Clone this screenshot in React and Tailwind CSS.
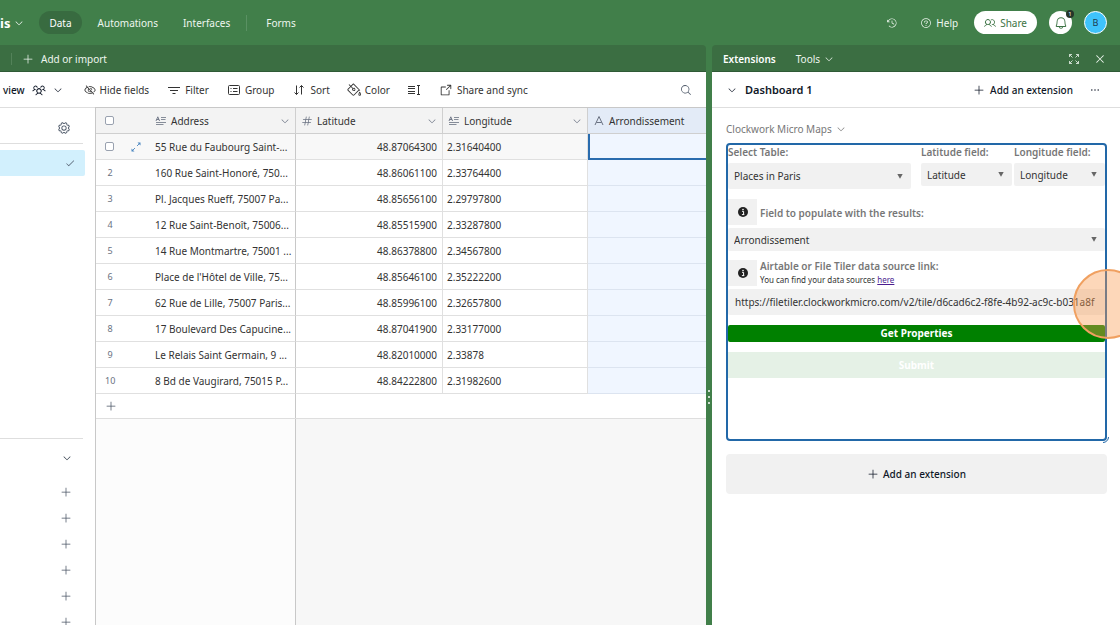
import React from "react";
import {
  PiClockCounterClockwise, PiQuestion, PiUsers, PiBell, PiCaretDown, PiX, PiPlus,
  PiEyeSlash, PiPaintBucket, PiArrowSquareOut, PiMagnifyingGlass, PiUsersThree,
  PiGear, PiCheck, PiHash, PiDotsThreeBold,
} from "react-icons/pi";

const rows = [
  ["55 Rue du Faubourg Saint-...", "48.87064300", "2.31640400"],
  ["160 Rue Saint-Honoré, 750...", "48.86061100", "2.33764400"],
  ["Pl. Jacques Rueff, 75007 Pa...", "48.85656100", "2.29797800"],
  ["12 Rue Saint-Benoît, 75006...", "48.85515900", "2.33287800"],
  ["14 Rue Montmartre, 75001 ...", "48.86378800", "2.34567800"],
  ["Place de l'Hôtel de Ville, 75...", "48.85646100", "2.35222200"],
  ["62 Rue de Lille, 75007 Paris...", "48.85996100", "2.32657800"],
  ["17 Boulevard Des Capucine...", "48.87041900", "2.33177000"],
  ["Le Relais Saint Germain, 9 ...", "48.82010000", "2.33878"],
  ["8 Bd de Vaugirard, 75015 P...", "48.84222800", "2.31982600"],
];

function Svg({ className, children, box = 14, width = 1 }) {
  return (
    <svg viewBox={`0 0 ${box} ${box}`} className={className} fill="none" stroke="currentColor" strokeWidth={width} aria-hidden="true">
      {children}
    </svg>
  );
}

const FilterIcon = () => (
  <Svg className="h-3.5 w-3.5"><path d="M1 4.500h12M3 7.500h8M5.500 10.500h3" /></Svg>
);
const GroupIcon = () => (
  <Svg className="h-3.5 w-3.5"><rect x="1.500" y="2.500" width="11" height="9" rx="1" /><path d="M3.500 5.500h1M6 5.500h4.500M3.500 8.500h1M6 8.500h4.500" /></Svg>
);
const SortIcon = () => (
  <Svg className="h-3.5 w-3.5"><path d="M4.500 2.500v9M2.500 9.500l2 2 2-2M9.500 11.500v-9M7.500 4.500l2-2 2 2" /></Svg>
);
const RowHeightIcon = () => (
  <Svg className="h-3.5 w-3.5"><path d="M1 3.500h7M1 5.500h7M1 8.500h7M1 10.500h7M11.500 3v8M10 2.500h3M10 11.500h3" /></Svg>
);
const LongTextIcon = () => (
  <svg viewBox="0 0 12 12" className="h-3 w-3 shrink-0 text-gray-500" fill="none" stroke="currentColor" aria-hidden="true">
    <path d="M1 6l1.800-4.200L4.600 6M1.600 4.500h2.400" strokeWidth=".9" />
    <path d="M6 2.500h5M6 4.500h4.500M1 7.500h10M1 9.500h7.500" strokeWidth=".8" />
  </svg>
);
const TextIcon = () => (
  <Svg className="h-3 w-3 shrink-0 text-gray-500" box={12}><path d="M2 10l4-8.500L10 10M3.400 7.500h5.200" /></Svg>
);
const ExpandRecordIcon = () => (
  <svg viewBox="0 0 12 12" className="h-3 w-3 text-[#4a86c0]" aria-hidden="true">
    <path d="M7 5l3-3M5 7l-3 3" fill="none" stroke="currentColor" strokeWidth=".9" />
    <path d="M7.500 1.500h3v3zM4.500 10.500h-3v-3z" fill="currentColor" />
  </svg>
);
const FullscreenIcon = () => (
  <Svg className="h-3 w-3" box={12} width={0.8}><path d="M7.500 4.500l3-3M8 1.500h2.500V4M4.500 7.500l-3 3M4 10.500H1.500V8M4.500 4.500l-3-3M4 1.500H1.500V4M7.500 7.500l3 3M8 10.500h2.500V8" /></Svg>
);

function InfoButton() {
  return (
    <button type="button" aria-label="More information" className="flex h-[26px] w-[29px] shrink-0 items-center justify-center bg-[#f1f1f1]">
      <svg viewBox="0 0 10 10" className="h-2.5 w-2.5" aria-hidden="true">
        <circle cx="5" cy="5" r="5" fill="#222" />
        <path d="M4 4.300h1.600V7.500M3.900 7.600h2.400" stroke="#fff" strokeWidth="1" fill="none" />
        <circle cx="5" cy="2.500" r=".8" fill="#fff" />
      </svg>
    </button>
  );
}

function Picker({ id, label, value, className = "" }) {
  return (
    <div className={`relative ${className}`}>
      <select id={id} aria-label={label} className="h-full w-full appearance-none rounded-xs bg-[#f1f1f1] pl-1.5 text-[#333]" defaultValue={value}>
        <option>{value}</option>
      </select>
      <span className="pointer-events-none absolute inset-y-0 right-2 flex items-center text-[#666]">
        <svg viewBox="0 0 6 5" className="h-[5px] w-1.5" aria-hidden="true">
          <path d="M.3 0h5.400L3 4.800z" fill="currentColor" />
        </svg>
      </span>
    </div>
  );
}

function TopBar() {
  return (
    <header className="flex h-[45px] shrink-0 items-center bg-[#417f4a] pr-[13px] text-[#eef6ef]">
      <button type="button" className="flex items-center gap-1 text-[13px] font-bold text-white">
        is <PiCaretDown className="h-2.5 w-2.5" />
      </button>
      <nav className="ml-[15px] flex items-center">
        <a href="#data" className="flex h-[23px] items-center rounded-full bg-[#386b40] px-2.5 text-white">Data</a>
        <a href="#automations" className="ml-4">Automations</a>
        <a href="#interfaces" className="ml-[25px]">Interfaces</a>
        <span className="ml-4 h-4 w-px bg-[#5a9163]" />
        <a href="#forms" className="ml-[19px]">Forms</a>
      </nav>
      <div className="ml-auto flex items-center">
        <button type="button" aria-label="History" className="mr-[22px]"><PiClockCounterClockwise className="h-3 w-3" /></button>
        <button type="button" className="mr-4 flex items-center gap-1"><PiQuestion className="h-3 w-3" />Help</button>
        <button type="button" className="mr-3 flex h-[23px] items-center gap-1 rounded-full bg-white px-2.5 text-[#3c7344]">
          <PiUsers className="h-3 w-3" />Share
        </button>
        <button type="button" aria-label="Notifications" className="relative mr-3 flex h-[23px] w-[23px] items-center justify-center rounded-full bg-white text-[#3c7344]">
          <PiBell className="h-3.5 w-3.5" />
          <span className="absolute -top-px -right-0.5 flex h-2 w-2 items-center justify-center rounded-full bg-[#26352a] text-[6px] text-white">1</span>
        </button>
        <button type="button" aria-label="Account" className="flex h-[23px] w-[23px] items-center justify-center rounded-full border border-white bg-[#3fc3fb] text-[9px] text-[#1d3b4f]">B</button>
      </div>
    </header>
  );
}

function ToolButton({ icon, children, className = "" }) {
  return (
    <button type="button" className={`flex items-center gap-1 whitespace-nowrap ${className}`}>
      {icon}{children}
    </button>
  );
}

function Sidebar() {
  return (
    <aside className="w-[95px] shrink-0 overflow-hidden border-t border-[#dedede] text-gray-600">
      <div className="mr-3 flex h-9 items-center justify-end border-b border-[#dedede] pt-1 pr-3">
        <button type="button" aria-label="View settings"><PiGear className="block h-3.5 w-3.5" /></button>
      </div>
      <div className="mt-1.5 mr-2.5 flex h-[26px] items-center justify-end rounded-r-xs bg-[#d2f0fd] pr-2.5">
        <PiCheck className="h-2.5 w-2.5" />
      </div>
      <div className="mt-[262px] mr-3 border-t border-[#dedede]" />
      <div className="mt-1.5 mr-[23px] flex flex-col items-end">
        <button type="button" aria-label="Collapse list" className="flex h-[26px] items-center text-gray-800"><PiCaretDown className="h-2.5 w-2.5" /></button>
        <div className="mt-2 flex flex-col">
          {[1, 2, 3, 4, 5, 6].map((n) => (
            <button key={n} type="button" aria-label={`Create item ${n}`} className="flex h-[26px] items-center"><PiPlus className="h-3 w-3" /></button>
          ))}
        </div>
      </div>
    </aside>
  );
}

function HeaderCell({ icon, children, menu = true, className = "" }) {
  return (
    <th scope="col" className={`border-r border-b border-[#cfcfcf] px-[5px] font-normal ${className}`}>
      <div className="flex items-center gap-1">
        {icon}<span>{children}</span>
        {menu && <PiCaretDown className="ml-auto h-2.5 w-2.5 text-gray-500" />}
      </div>
    </th>
  );
}

function Grid() {
  return (
    <div className="flex min-w-0 flex-1 flex-col border-t border-l border-[#c8c8c8]">
      <table className="w-full table-fixed border-separate border-spacing-0 text-left text-[#333]">
        <colgroup>
          <col className="w-[54px]" /><col className="w-[146px]" /><col className="w-[147px]" /><col className="w-[145px]" /><col />
        </colgroup>
        <thead>
          <tr className="h-[26px] bg-[#f3f3f3]">
            <th className="border-b border-[#cfcfcf] pl-[9px]">
              <input type="checkbox" aria-label="Select all rows" className="block h-[9px] w-[9px] appearance-none rounded-xs border border-gray-400 bg-white" />
            </th>
            <HeaderCell icon={<LongTextIcon />}>Address</HeaderCell>
            <HeaderCell icon={<PiHash className="h-3 w-3 text-gray-500" />}>Latitude</HeaderCell>
            <HeaderCell icon={<LongTextIcon />}>Longitude</HeaderCell>
            <HeaderCell icon={<TextIcon />} menu={false} className="border-r-0 bg-[#e3ebf7]">Arrondissement</HeaderCell>
          </tr>
        </thead>
        <tbody>
          {rows.map(([address, lat, lng], i) => (
            <tr key={address} className={i === 0 ? "h-[26px] bg-[#f8f8f8]" : "h-[26px] bg-white"}>
              <td className="border-b border-[#e0e0e0] pl-[9px] text-[9px] text-gray-500">
                {i === 0 ? (
                  <div className="flex items-center justify-between pr-2">
                    <input type="checkbox" aria-label="Select row 1" className="block h-[9px] w-[9px] appearance-none rounded-xs border border-gray-400 bg-white" />
                    <button type="button" aria-label="Expand record"><ExpandRecordIcon /></button>
                  </div>
                ) : (
                  <span className="block w-2.5 text-center">{i + 1}</span>
                )}
              </td>
              <td className="overflow-hidden border-r border-b border-[#e0e0e0] border-r-[#c8c8c8] pl-[5px] whitespace-nowrap">{address}</td>
              <td className="border-r border-b border-[#e0e0e0] pr-[5px] text-right">{lat}</td>
              <td className="border-r border-b border-[#e0e0e0] pl-1">{lng}</td>
              <td className={i === 0 ? "border-b-2 border-l-2 border-[#2a6cae] bg-[#f0f6ff]" : "border-b border-[#dce4f0] bg-[#f0f6ff]"} />
            </tr>
          ))}
        </tbody>
      </table>
      <div className="flex h-[25px] shrink-0 border-b border-[#dedede] bg-white">
        <div className="flex w-[200px] items-center border-r border-[#c8c8c8] pl-[9px] text-gray-600">
          <button type="button" aria-label="Add row"><PiPlus className="block h-3 w-3" /></button>
        </div>
      </div>
      <div className="flex flex-1 bg-[#f7f7f7]">
        <div className="w-[200px] border-r border-[#c8c8c8] bg-[#fcfcfc]" />
      </div>
    </div>
  );
}

function Workspace() {
  return (
    <main className="flex min-w-0 flex-1 flex-col overflow-hidden">
      <div className="flex h-[27px] shrink-0 items-center rounded-tr-sm border-b border-[#2f5a36] bg-[#3b6e42] pt-px pl-[11px] text-[#eef6ef]">
        <span className="h-3 w-px bg-[#538259]" />
        <button type="button" className="ml-2.5 flex items-center gap-[7px]"><PiPlus className="h-3 w-3" />Add or import</button>
      </div>
      <div className="flex h-[35px] shrink-0 items-center bg-white pr-3.5 pl-[3px] text-[#333]">
        <button type="button" className="flex items-center gap-[7px] font-medium text-gray-900">view <PiUsersThree className="h-3.5 w-3.5" /><PiCaretDown className="h-2.5 w-2.5" /></button>
        <ToolButton className="ml-[21px]" icon={<PiEyeSlash className="h-3 w-3" />}>Hide fields</ToolButton>
        <ToolButton className="ml-[18px]" icon={<FilterIcon />}>Filter</ToolButton>
        <ToolButton className="ml-[18px]" icon={<GroupIcon />}>Group</ToolButton>
        <ToolButton className="ml-[18px]" icon={<SortIcon />}>Sort</ToolButton>
        <ToolButton className="ml-[17px]" icon={<PiPaintBucket className="h-3.5 w-3.5" />}>Color</ToolButton>
        <button type="button" aria-label="Row height" className="ml-[17px]"><RowHeightIcon /></button>
        <ToolButton className="ml-[18px]" icon={<PiArrowSquareOut className="h-3.5 w-3.5" />}>Share and sync</ToolButton>
        <button type="button" aria-label="Search" className="ml-auto text-gray-600"><PiMagnifyingGlass className="h-3 w-3" /></button>
      </div>
      <div className="flex min-h-0 flex-1 bg-white">
        <Sidebar />
        <Grid />
      </div>
    </main>
  );
}

function MapsExtension() {
  return (
    <div className="relative h-[298px] rounded-sm border-2 border-[#2268a8] text-[#333]">
      <div className="flex items-start">
        <div className="flex-1">
          <label htmlFor="table" className="block h-[18px] leading-[14px] font-semibold text-[#777]">Select Table:</label>
          <Picker id="table" value="Places in Paris" className="h-[26px]" />
        </div>
        <div className="ml-2.5 w-[91px]">
          <label htmlFor="latitude" className="block h-[18px] leading-[14px] font-semibold text-[#777]">Latitude field:</label>
          <Picker id="latitude" value="Latitude" className="h-[23px]" />
        </div>
        <div className="ml-0.5 w-[91px]">
          <label htmlFor="longitude" className="block h-[18px] leading-[14px] font-semibold whitespace-nowrap text-[#777]">Longitude field:</label>
          <Picker id="longitude" value="Longitude" className="h-[23px]" />
        </div>
      </div>
      <div className="mt-2.5 flex items-center gap-[3px]">
        <InfoButton />
        <label htmlFor="target" className="pt-0.5 font-semibold text-[#777]">Field to populate with the results:</label>
      </div>
      <Picker id="target" value="Arrondissement" className="mt-[3px] h-[23px]" />
      <div className="mt-2 flex items-center gap-[3px]">
        <InfoButton />
        <div>
          <label htmlFor="source" className="block leading-[14px] font-semibold text-[#777]">Airtable or File Tiler data source link:</label>
          <p className="text-[8px] leading-[14px]">You can find your data sources <a href="#sources" className="text-[#4b1d8f] underline">here</a></p>
        </div>
      </div>
      <input id="source" type="text" defaultValue="https://filetiler.clockworkmicro.com/v2/tile/d6cad6c2-f8fe-4b92-ac9c-b031a8f" className="mt-0.5 block h-[26px] w-full rounded-xs bg-[#f1f1f1] px-[7px]" />
      <button type="button" className="mt-2.5 block h-[17px] w-full rounded-xs bg-[#008000] leading-[17px] font-bold text-white">Get Properties</button>
      <button type="button" disabled className="mt-2.5 block h-[26px] w-full bg-[#e5f1e6] font-bold text-white">Submit</button>
      <svg viewBox="0 0 6 6" className="absolute -right-1 -bottom-1 h-1.5 w-1.5 text-[#2268a8]" aria-hidden="true"><path d="M5.500 0A5.500 5.500 0 0 1 0 5.500" fill="none" stroke="currentColor" /></svg>
      <div className="pointer-events-none absolute top-[124px] -right-[38px] h-[70px] w-[70px] rounded-full border-2 border-[#f0a060] bg-[#fa9b50]/40" />
    </div>
  );
}

function ExtensionsPanel() {
  return (
    <aside className="flex w-[408px] shrink-0 flex-col overflow-hidden bg-white">
      <div className="bg-[#417f4a]">
        <div className="flex h-[27px] items-center rounded-tl-sm border-b border-[#2f5a36] bg-[#3b6e42] pt-px pr-3.5 pl-[11px] text-[#eef6ef]">
          <h2 className="font-semibold text-white">Extensions</h2>
          <button type="button" className="ml-5 flex items-center gap-1">Tools <PiCaretDown className="h-2.5 w-2.5" /></button>
          <button type="button" aria-label="Full screen" className="ml-auto"><FullscreenIcon /></button>
          <button type="button" aria-label="Close" className="ml-3.5"><PiX className="h-3 w-3" /></button>
        </div>
      </div>
      <div className="flex h-9 shrink-0 items-center border-b border-[#dedede] pr-[19px] pl-[15px] text-gray-900">
        <button type="button" aria-label="Collapse dashboard"><PiCaretDown className="h-2.5 w-2.5" /></button>
        <h3 className="ml-2 text-[11px] font-semibold">Dashboard 1</h3>
        <button type="button" className="ml-auto flex items-center gap-[5px] font-medium"><PiPlus className="h-3 w-3" />Add an extension</button>
        <button type="button" aria-label="More options" className="ml-4"><PiDotsThreeBold className="h-3 w-3" /></button>
      </div>
      <div className="px-3.5 pt-[13px] pr-[13px]">
        <button type="button" className="mb-1.5 flex h-4 items-center gap-1 text-[#777]">Clockwork Micro Maps <PiCaretDown className="h-2.5 w-2.5" /></button>
        <MapsExtension />
        <button type="button" className="mt-[13px] flex h-10 w-full items-center justify-center gap-1 rounded-sm bg-[#f1f1f1] font-medium text-gray-900">
          <PiPlus className="h-3 w-3" />Add an extension
        </button>
      </div>
    </aside>
  );
}

export default function App() {
  return (
    <div className="flex h-screen flex-col overflow-hidden bg-[#417f4a] font-['Noto_Sans','Open_Sans',sans-serif] text-[10px] leading-4">
      <TopBar />
      <div className="flex min-h-0 flex-1">
        <Workspace />
        <div className="flex w-1.5 flex-col items-center justify-center gap-1 pt-[124px]" role="separator" aria-orientation="vertical">
          <span className="h-0.5 w-0.5 rounded-full bg-white" />
          <span className="h-0.5 w-0.5 rounded-full bg-white" />
          <span className="h-0.5 w-0.5 rounded-full bg-white" />
        </div>
        <ExtensionsPanel />
      </div>
    </div>
  );
}
